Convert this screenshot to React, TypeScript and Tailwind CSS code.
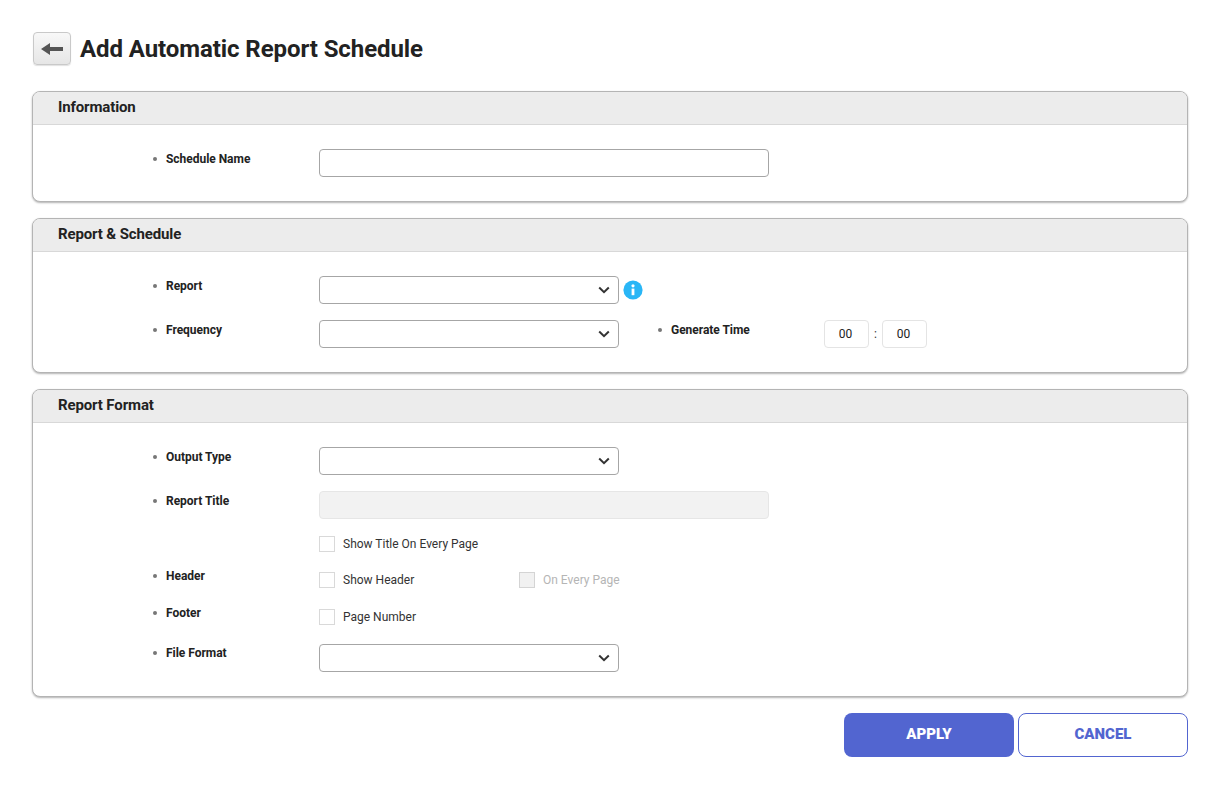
import React from "react";

function Panel({ title, children }: { title: string; children: React.ReactNode }) {
  return (
    <section className="rounded-lg border border-[#b4b4b4] bg-white shadow-[0_1px_2px_rgba(0,0,0,0.3)] overflow-hidden">
      <div className="h-[33px] bg-[#ececec] border-b border-[#d8d8d8] pl-[25px] pb-[2px] flex items-center text-[15px] leading-none font-bold text-[#222] tracking-[-0.13px]">
        {title}
      </div>
      <div className="pt-[24px] pb-[24px] flex flex-col">{children}</div>
    </section>
  );
}

function Label({ text, h = "h-[20px]" }: { text: string; h?: string }) {
  return (
    <div className="w-[286px] shrink-0 flex items-start">
      <div className={`flex items-center ${h}`}>
        <span className="w-[4px] h-[4px] rounded-full bg-[#777] ml-[120px] mr-[9px]" />
        <span className="text-[12px] leading-[20px] font-bold text-[#222] tracking-[-0.03px]">{text}</span>
      </div>
    </div>
  );
}

function Select() {
  return (
    <div className="w-[300px] h-[28px] rounded border border-[#a6a6a6] bg-white flex items-center justify-end pr-[8px]">
      <svg width="12" height="8" viewBox="0 0 12 8" fill="none">
        <path d="M1.2 1.5 L6 6.2 L10.8 1.5" stroke="#333" strokeWidth="2" />
      </svg>
    </div>
  );
}

function Check({ text, disabled }: { text: string; disabled?: boolean }) {
  return (
    <div className="flex items-center gap-[8px]">
      <span className={`w-[16px] h-[16px] border ${disabled ? "bg-[#f1f1f1] border-[#d4d4d4]" : "bg-white border-[#d9d9d9]"}`} />
      <span className={`text-[12px] leading-[16px] ${disabled ? "text-[#b5b5b5]" : "text-[#333]"}`}>{text}</span>
    </div>
  );
}

function Time() {
  return (
    <div className="w-[45px] h-[28px] rounded border border-[#e4e4e4] flex items-center justify-center pr-[2px] text-[12px] text-[#222]">00</div>
  );
}

export default function App() {
  return (
    <div className="w-[1220px] h-[791px] bg-white px-[32px] pt-[32px] font-['Roboto',sans-serif] overflow-hidden">
      <header className="flex items-center h-[33px] mb-[26px]">
        <button className="ml-px w-[38px] h-[33px] rounded border border-[#c9c9c9] bg-gradient-to-b from-[#f8f8f8] to-[#e6e6e6] flex items-center justify-center shadow-[0_1px_1px_rgba(0,0,0,0.12)]">
          <svg width="22" height="12" viewBox="0 0 22 12">
            <path d="M0 6 L9 0 V4 H22 V8 H9 V12 Z" fill="#555" />
          </svg>
        </button>
        <h1 className="ml-[9px] text-[24px] leading-none font-bold text-[#222] tracking-[-0.08px]">Add Automatic Report Schedule</h1>
      </header>

      <div className="flex flex-col gap-[16px]">
        <Panel title="Information">
          <div className="flex">
            <Label text="Schedule Name" />
            <div className="w-[450px] h-[28px] rounded border border-[#a6a6a6] bg-white" />
          </div>
        </Panel>

        <Panel title="Report & Schedule">
          <div className="flex flex-col gap-[16px]">
            <div className="flex">
              <Label text="Report" />
              <Select />
              <svg className="ml-[4px] mt-[4px]" width="20" height="20" viewBox="0 0 20 20">
                <circle cx="10" cy="10" r="9.6" fill="#29b6f6" />
                <circle cx="10" cy="5.8" r="1.6" fill="#fff" />
                <rect x="8.6" y="8.6" width="2.8" height="6.6" fill="#fff" />
              </svg>
            </div>
            <div className="flex">
              <Label text="Frequency" />
              <Select />
              <div className="w-[205px] shrink-0 flex items-start">
                <div className="flex items-center h-[20px]">
                  <span className="w-[4px] h-[4px] rounded-full bg-[#777] ml-[39px] mr-[9px]" />
                  <span className="text-[12px] leading-[20px] font-bold text-[#222] tracking-[-0.03px]">Generate Time</span>
                </div>
              </div>
              <div className="flex items-center">
                <Time />
                <span className="w-[13px] text-center text-[12px] text-[#333]">:</span>
                <Time />
              </div>
            </div>
          </div>
        </Panel>

        <Panel title="Report Format">
          <div className="flex flex-col">
            <div className="flex mb-[16px]">
              <Label text="Output Type" />
              <Select />
            </div>
            <div className="flex mb-[17px]">
              <Label text="Report Title" />
              <div className="w-[450px] h-[28px] rounded border border-[#e6e6e6] bg-[#f2f2f2]" />
            </div>
            <div className="flex mb-[14px]">
              <div className="w-[286px] shrink-0" />
              <Check text="Show Title On Every Page" />
            </div>
            <div className="flex mb-[15px]">
              <Label text="Header" />
              <div className="pt-[6px] flex">
                <div className="w-[200px]">
                  <Check text="Show Header" />
                </div>
                <Check text="On Every Page" disabled />
              </div>
            </div>
            <div className="flex mb-[19px]">
              <Label text="Footer" />
              <div className="pt-[6px]">
                <Check text="Page Number" />
              </div>
            </div>
            <div className="flex">
              <Label text="File Format" h="h-[18px]" />
              <Select />
            </div>
          </div>
        </Panel>
      </div>

      <div className="flex justify-end gap-[4px] mt-[16px]">
        <button className="w-[170px] h-[44px] rounded-lg bg-[#5265d0] text-white text-[15px] font-black pb-[2px]">APPLY</button>
        <button className="w-[170px] h-[44px] rounded-lg border border-[#5265d0] bg-white text-[#5265d0] text-[15px] font-black pb-[2px]">CANCEL</button>
      </div>
    </div>
  );
}
